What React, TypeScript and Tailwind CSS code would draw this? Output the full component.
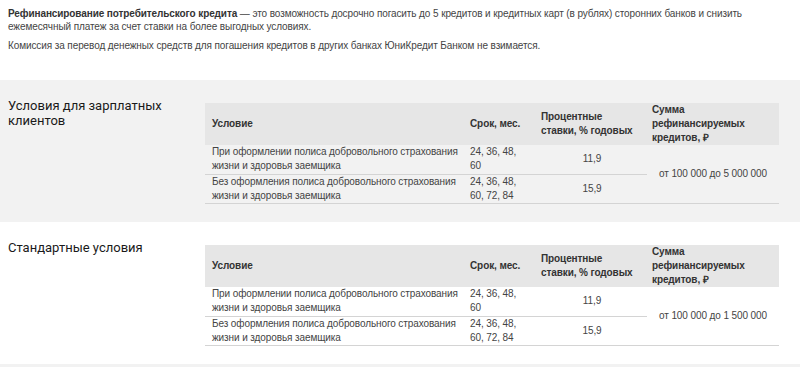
import React from 'react';

interface Row {
  condition: string;
  term: string;
  rate: string;
}

const rows: Row[] = [
  {
    condition: 'При оформлении полиса добровольного страхования жизни и здоровья заемщика',
    term: '24, 36, 48, 60',
    rate: '11,9',
  },
  {
    condition: 'Без оформления полиса добровольного страхования жизни и здоровья заемщика',
    term: '24, 36, 48, 60, 72, 84',
    rate: '15,9',
  },
];

function RatesTable({ amount }: { amount: string }) {
  return (
    <table className="w-[574px] self-start table-fixed border-collapse text-[10px] leading-[14px] tracking-[-0.1px] text-[#444]">
      <thead>
        <tr className="bg-[#e6e6e6] text-[#333]">
          <th className="w-[262px] px-[7px] py-0 text-left font-bold">Условие</th>
          <th className="w-[70px] pl-[3px] pr-[9px] py-0 text-left font-bold">Срок, мес.</th>
          <th className="w-[110px] pl-[4px] pr-[2px] py-0 text-left font-bold">
            Процентные
            <br />
            ставки, % годовых
          </th>
          <th className="h-[42px] pl-[5px] pr-[2px] py-0 text-left font-bold">
            Сумма
            <br />
            рефинансируемых
            <br />
            кредитов, ₽
          </th>
        </tr>
      </thead>
      <tbody>
        {rows.map((row, i) => (
          <tr key={i}>
            <td className="h-[29px] border-b border-[#d4d4d4] px-[7px] py-0 align-middle">{row.condition}</td>
            <td className="border-b border-[#d4d4d4] pl-[3px] pr-[9px] py-0 align-middle">{row.term}</td>
            <td className="border-b border-[#d4d4d4] px-[6px] py-0 text-center align-middle">{row.rate}</td>
            {i === 0 && (
              <td rowSpan={2} className="border-b border-[#d4d4d4] px-[4px] py-0 text-center align-middle">
                {amount}
              </td>
            )}
          </tr>
        ))}
      </tbody>
    </table>
  );
}

function Section({ title, amount, gray }: { title: React.ReactNode; amount: string; gray?: boolean }) {
  return (
    <div className={`flex h-[142px] items-start pt-[23px] ${gray ? 'bg-[#f2f2f2]' : 'bg-white'}`}>
      <h2 className="-mt-[5px] w-[205px] shrink-0 pl-[8px] font-['Roboto',sans-serif] text-[13px] font-normal leading-[15px] text-[#1a1a1a]">
        {title}
      </h2>
      <RatesTable amount={amount} />
    </div>
  );
}

export default function App() {
  return (
    <div className="h-[367px] w-[800px] overflow-hidden bg-white font-['Liberation_Sans',Arial,sans-serif]">
      {/* Intro */}
      <div className="h-[80px] px-[8px] pt-[7px] text-[10px] leading-[13px] tracking-[-0.1px] text-[#444]">
        <p className="w-[740px]">
          <strong className="text-[#333]">Рефинансирование потребительского кредита</strong> — это возможность досрочно
          погасить до 5 кредитов и кредитных карт (в рублях) сторонних банков и снизить ежемесячный платеж за счет
          ставки на более выгодных условиях.
        </p>
        <p className="mt-[6px]">
          Комиссия за перевод денежных средств для погашения кредитов в других банках ЮниКредит Банком не взимается.
        </p>
      </div>

      <Section
        gray
        amount="от 100 000 до 5 000 000"
        title={
          <>
            Условия для зарплатных
            <br />
            клиентов
          </>
        }
      />
      <Section amount="от 100 000 до 1 500 000" title="Стандартные условия" />
      <div className="h-[10px] bg-[#f2f2f2]" />
    </div>
  );
}
